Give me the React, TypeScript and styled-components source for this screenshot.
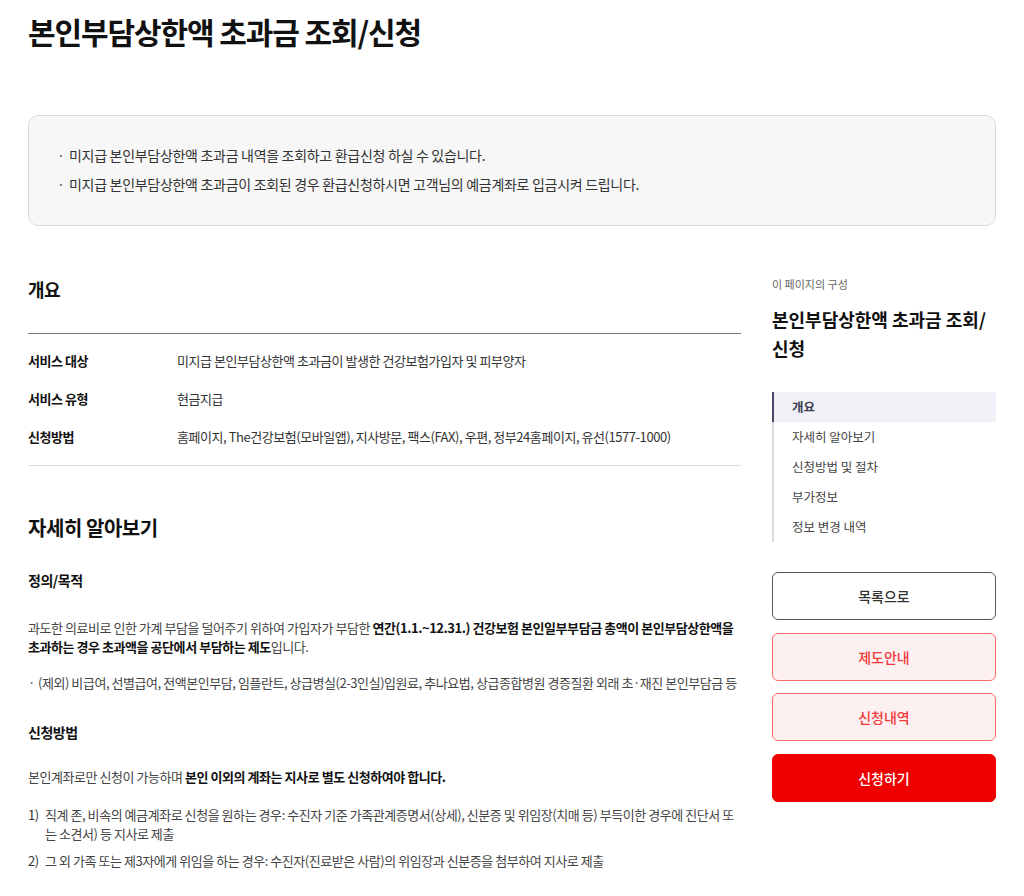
import * as React from 'react';
import styled, {createGlobalStyle} from 'styled-components';

const GlobalStyle = createGlobalStyle`
    body {
        margin: 0;
        background: #fff;
        color: #333;
        font-family: "Noto Sans CJK KR", "Noto Sans", sans-serif;
    }
    * {
        box-sizing: border-box;
    }
`;

const Page = styled.div`
    padding: 12px 28px 40px;
`;

const PageTitle = styled.h1`
    margin: 0;
    font-size: 30px;
    line-height: 39px;
    font-weight: 700;
    color: #111;
    letter-spacing: -1.1px;
`;

const InfoBox = styled.ul`
    margin: 64px 0 0;
    padding: 25px 28px 26px;
    list-style: none;
    background: #f7f7f7;
    border: 1px solid #dcdcdc;
    border-radius: 10px;
`;

const InfoItem = styled.li`
    display: flex;
    font-size: 14px;
    line-height: 29px;
    color: #333;
    letter-spacing: -0.3px;

    &::before {
        content: '·';
        width: 12px;
        flex-shrink: 0;
        color: #666;
    }
`;

const Layout = styled.div`
    display: grid;
    grid-template-columns: 713px 224px;
    column-gap: 31px;
    margin-top: 50px;
`;

const Main = styled.main`
    min-width: 0;
    letter-spacing: -0.45px;
`;

const SectionTitle = styled.h2<{$size: number}>`
    margin: 0;
    font-size: ${p => p.$size}px;
    line-height: ${p => p.$size + 8}px;
    font-weight: 700;
    color: #111;
`;

const Overview = styled.section`
    border-bottom: 1px solid #ddd;
    padding-bottom: 9px;

    & > h2 {
        padding-bottom: 31px;
        border-bottom: 1px solid #777;
    }
`;

const SummaryList = styled.dl`
    margin: 0;
    padding-top: 8px;
`;

const SummaryRow = styled.div`
    display: flex;
    padding: 9px 0;
    font-size: 13px;
    line-height: 20px;
`;

const SummaryLabel = styled.dt`
    width: 149px;
    flex-shrink: 0;
    font-weight: 700;
    color: #111;
`;

const SummaryValue = styled.dd`
    margin: 0;
    color: #333;
`;

const Details = styled.section`
    margin-top: 48px;
`;

const SubTitle = styled.h3<{$gap: number}>`
    margin: ${p => p.$gap}px 0 0;
    font-size: 14px;
    line-height: 20px;
    font-weight: 700;
    color: #111;
`;

const Paragraph = styled.p<{$gap: number}>`
    margin: ${p => p.$gap}px 0 0;
    font-size: 13px;
    line-height: 19px;
    color: #444;

    strong {
        color: #111;
        font-weight: 700;
    }
`;

const DotList = styled.ul`
    margin: 17px 0 0;
    padding: 0;
    list-style: none;
`;

const DotItem = styled.li`
    display: flex;
    font-size: 13px;
    line-height: 19px;
    color: #444;

    &::before {
        content: '·';
        width: 10px;
        flex-shrink: 0;
    }
`;

const NumberList = styled.ol`
    margin: 19px 0 0;
    padding: 0;
    list-style: none;
    display: flex;
    flex-direction: column;
    gap: 8px;
`;

const NumberItem = styled.li`
    display: flex;
    font-size: 13px;
    line-height: 19px;
    color: #444;
`;

const NumberMark = styled.span`
    width: 17px;
    flex-shrink: 0;
    color: #333;
`;

const Aside = styled.aside`
    display: flex;
    flex-direction: column;
`;

const AsideCaption = styled.div`
    font-size: 11px;
    line-height: 16px;
    color: #666;
`;

const AsideTitle = styled.div`
    margin-top: 13px;
    font-size: 18px;
    line-height: 29px;
    font-weight: 700;
    color: #111;
    word-break: keep-all;
`;

const Toc = styled.nav`
    margin-top: 29px;
    border-left: 2px solid #d8d8e0;
    display: flex;
    flex-direction: column;
`;

const TocItem = styled.a<{$active?: boolean}>`
    display: block;
    height: 30px;
    line-height: 30px;
    padding-left: 18px;
    margin-left: -2px;
    border-left: 2px solid ${p => (p.$active ? '#4a4a68' : 'transparent')};
    background: ${p => (p.$active ? '#f1f1f7' : 'transparent')};
    font-size: 12.5px;
    color: ${p => (p.$active ? '#3a3a50' : '#444')};
    font-weight: ${p => (p.$active ? 700 : 400)};
    text-decoration: none;
`;

const ButtonStack = styled.div`
    margin-top: 30px;
    display: flex;
    flex-direction: column;
    gap: 12.5px;
`;

const ActionButton = styled.button<{$variant: 'plain' | 'soft' | 'solid'}>`
    height: 48px;
    border-radius: 6px;
    font-family: inherit;
    font-size: 14px;
    font-weight: 500;
    cursor: pointer;
    border: 1px solid ${p => (p.$variant === 'plain' ? '#555' : p.$variant === 'soft' ? '#ff6b6b' : '#ee0000')};
    background: ${p => (p.$variant === 'plain' ? '#fff' : p.$variant === 'soft' ? '#fdf0f0' : '#ee0000')};
    color: ${p => (p.$variant === 'plain' ? '#333' : p.$variant === 'soft' ? '#f03a3a' : '#fff')};
`;

const summary = [
    {label: '서비스 대상', value: '미지급 본인부담상한액 초과금이 발생한 건강보험가입자 및 피부양자'},
    {label: '서비스 유형', value: '현금지급'},
    {label: '신청방법', value: '홈페이지, The건강보험(모바일앱), 지사방문, 팩스(FAX), 우편, 정부24홈페이지, 유선(1577-1000)'},
];

const tocItems = ['개요', '자세히 알아보기', '신청방법 및 절차', '부가정보', '정보 변경 내역'];

const App: React.FC = () => {
    return (
        <Page>
            <GlobalStyle/>
            <PageTitle>본인부담상한액 초과금 조회/신청</PageTitle>
            <InfoBox>
                <InfoItem>미지급 본인부담상한액 초과금 내역을 조회하고 환급신청 하실 수 있습니다.</InfoItem>
                <InfoItem>미지급 본인부담상한액 초과금이 조회된 경우 환급신청하시면 고객님의 예금계좌로 입금시켜 드립니다.</InfoItem>
            </InfoBox>
            <Layout>
                <Main>
                    <Overview>
                        <SectionTitle $size={18}>개요</SectionTitle>
                        <SummaryList>
                            {summary.map((row) => (
                                <SummaryRow key={row.label}>
                                    <SummaryLabel>{row.label}</SummaryLabel>
                                    <SummaryValue>{row.value}</SummaryValue>
                                </SummaryRow>
                            ))}
                        </SummaryList>
                    </Overview>
                    <Details>
                        <SectionTitle $size={20}>자세히 알아보기</SectionTitle>
                        <SubTitle $gap={28}>정의/목적</SubTitle>
                        <Paragraph $gap={28}>
                            과도한 의료비로 인한 가계 부담을 덜어주기 위하여 가입자가 부담한 <strong>연간(1.1.~12.31.) 건강보험 본인일부부담금 총액이 본인부담상한액을 초과하는 경우 초과액을 공단에서 부담하는 제도</strong>입니다.
                        </Paragraph>
                        <DotList>
                            <DotItem>(제외) 비급여, 선별급여, 전액본인부담, 임플란트, 상급병실(2-3인실)입원료, 추나요법, 상급종합병원 경증질환 외래 초·재진 본인부담금 등</DotItem>
                        </DotList>
                        <SubTitle $gap={30}>신청방법</SubTitle>
                        <Paragraph $gap={25}>
                            본인계좌로만 신청이 가능하며 <strong>본인 이외의 계좌는 지사로 별도 신청하여야 합니다.</strong>
                        </Paragraph>
                        <NumberList>
                            <NumberItem>
                                <NumberMark>1)</NumberMark>
                                <span>직계 존, 비속의 예금계좌로 신청을 원하는 경우: 수진자 기준 가족관계증명서(상세), 신분증 및 위임장(치매 등) 부득이한 경우에 진단서 또는 소견서) 등 지사로 제출</span>
                            </NumberItem>
                            <NumberItem>
                                <NumberMark>2)</NumberMark>
                                <span>그 외 가족 또는 제3자에게 위임을 하는 경우: 수진자(진료받은 사람)의 위임장과 신분증을 첨부하여 지사로 제출</span>
                            </NumberItem>
                        </NumberList>
                    </Details>
                </Main>
                <Aside>
                    <AsideCaption>이 페이지의 구성</AsideCaption>
                    <AsideTitle>본인부담상한액 초과금 조회/ 신청</AsideTitle>
                    <Toc>
                        {tocItems.map((item, i) => (
                            <TocItem key={item} href="#" $active={i === 0}>{item}</TocItem>
                        ))}
                    </Toc>
                    <ButtonStack>
                        <ActionButton $variant="plain">목록으로</ActionButton>
                        <ActionButton $variant="soft">제도안내</ActionButton>
                        <ActionButton $variant="soft">신청내역</ActionButton>
                        <ActionButton $variant="solid">신청하기</ActionButton>
                    </ButtonStack>
                </Aside>
            </Layout>
        </Page>
    );
};

export default App;
